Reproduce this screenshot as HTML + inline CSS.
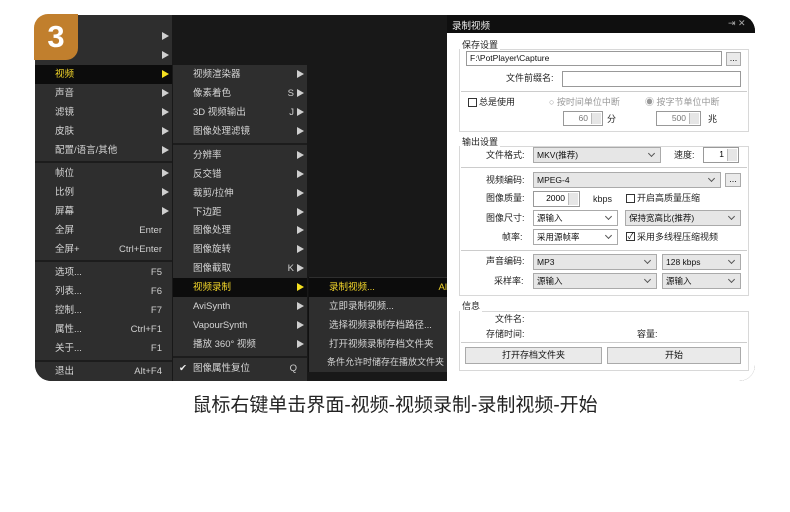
<!DOCTYPE html>
<html><head><meta charset="utf-8"><style>
*{margin:0;padding:0;box-sizing:border-box}
body{width:790px;height:512px;background:#fff;position:relative;overflow:hidden;font-family:"Liberation Sans","Noto Sans CJK SC",sans-serif}
.a{position:absolute}
#panel{left:35px;top:15px;width:720px;height:366px;border-radius:16px;overflow:hidden;background:#181818}
.col{position:absolute;background:#2d2d2d}
.it{position:absolute;height:19px;line-height:19px;font-size:9.5px;color:#d6d6d6;white-space:nowrap}
.it .t{position:absolute;left:20px}
.it .k{position:absolute;right:10px;color:#cfcfcf}
.it .ar{position:absolute;right:3px;top:5px;width:0;height:0;border-left:7px solid #cfcfcf;border-top:4.5px solid transparent;border-bottom:4.5px solid transparent}
.hl{background:#0c0c0c;color:#f3d62a}
.hl .ar{border-left-color:#f5e020}
.sep{position:absolute;height:2px;background:#1c1c1c}
.d{position:absolute;font-size:9px;color:#222;white-space:nowrap;line-height:12px}
.box{position:absolute;border:1px solid #d8d8d8}
.inp{position:absolute;border:1px solid #999;background:#fff;font-size:8.5px;line-height:13px;padding-left:3px;color:#111}
.sel{position:absolute;border:1px solid #aaa;background:#e6e6e6;font-size:8.5px;line-height:14px;padding-left:3px;color:#111}
.sel:after{content:"";position:absolute;right:6px;top:3px;width:4px;height:4px;border-right:1px solid #555;border-bottom:1px solid #555;transform:rotate(45deg)}
.btn{position:absolute;border:1px solid #aaa;background:#eaeaea;font-size:9px;text-align:center;line-height:15px;color:#111}
.sp{position:absolute;border:1px solid #999;background:#fff;font-size:8.5px;line-height:13px;text-align:right;padding-right:14px}
.sp:after{content:"";position:absolute;right:1px;top:1px;width:9px;bottom:1px;background:#e6e6e6;border-left:1px solid #bbb}
.hr{position:absolute;height:1px;background:#ccc}
.cb{position:absolute;width:9px;height:9px;border:1px solid #333;background:#fff}
</style></head><body>
<div id="panel" class="a">
 <div class="col" style="left:0;top:0;width:137px;height:366px;background:#2e2e2e"></div>
 <div class="it" style="left:0;top:12px;width:137px"><span class="ar"></span></div>
 <div class="it" style="left:0;top:31px;width:137px"><span class="t">字幕</span><span class="ar"></span></div>
 <div class="it hl" style="left:0;top:50px;width:137px"><span class="t">视频</span><span class="ar"></span></div>
 <div class="it" style="left:0;top:69px;width:137px"><span class="t">声音</span><span class="ar"></span></div>
 <div class="it" style="left:0;top:88px;width:137px"><span class="t">滤镜</span><span class="ar"></span></div>
 <div class="it" style="left:0;top:107px;width:137px"><span class="t">皮肤</span><span class="ar"></span></div>
 <div class="it" style="left:0;top:126px;width:137px"><span class="t">配置/语言/其他</span><span class="ar"></span></div>
 <div class="sep" style="left:0;top:146px;width:137px"></div>
 <div class="it" style="left:0;top:149px;width:137px"><span class="t">帧位</span><span class="ar"></span></div>
 <div class="it" style="left:0;top:168px;width:137px"><span class="t">比例</span><span class="ar"></span></div>
 <div class="it" style="left:0;top:187px;width:137px"><span class="t">屏幕</span><span class="ar"></span></div>
 <div class="it" style="left:0;top:206px;width:137px"><span class="t">全屏</span><span class="k">Enter</span></div>
 <div class="it" style="left:0;top:225px;width:137px"><span class="t">全屏+</span><span class="k">Ctrl+Enter</span></div>
 <div class="sep" style="left:0;top:245px;width:137px"></div>
 <div class="it" style="left:0;top:248px;width:137px"><span class="t">选项...</span><span class="k">F5</span></div>
 <div class="it" style="left:0;top:267px;width:137px"><span class="t">列表...</span><span class="k">F6</span></div>
 <div class="it" style="left:0;top:286px;width:137px"><span class="t">控制...</span><span class="k">F7</span></div>
 <div class="it" style="left:0;top:305px;width:137px"><span class="t">属性...</span><span class="k">Ctrl+F1</span></div>
 <div class="it" style="left:0;top:324px;width:137px"><span class="t">关于...</span><span class="k">F1</span></div>
 <div class="sep" style="left:0;top:345px;width:137px"></div>
 <div class="it" style="left:0;top:347px;width:137px"><span class="t">退出</span><span class="k">Alt+F4</span></div>
 <div class="col" style="left:138px;top:50px;width:134px;height:316px;background:#2e2e2e"></div>
 <div class="it" style="left:138px;top:50px;width:134px"><span class="t">视频渲染器</span><span class="ar"></span></div>
 <div class="it" style="left:138px;top:69px;width:134px"><span class="t">像素着色</span><span class="k" style="right:13px">S</span><span class="ar"></span></div>
 <div class="it" style="left:138px;top:88px;width:134px"><span class="t">3D 视频输出</span><span class="k" style="right:13px">J</span><span class="ar"></span></div>
 <div class="it" style="left:138px;top:107px;width:134px"><span class="t">图像处理滤镜</span><span class="ar"></span></div>
 <div class="sep" style="left:138px;top:128px;width:134px"></div>
 <div class="it" style="left:138px;top:131px;width:134px"><span class="t">分辨率</span><span class="ar"></span></div>
 <div class="it" style="left:138px;top:150px;width:134px"><span class="t">反交错</span><span class="ar"></span></div>
 <div class="it" style="left:138px;top:169px;width:134px"><span class="t">裁剪/拉伸</span><span class="ar"></span></div>
 <div class="it" style="left:138px;top:188px;width:134px"><span class="t">下边距</span><span class="ar"></span></div>
 <div class="it" style="left:138px;top:206px;width:134px"><span class="t">图像处理</span><span class="ar"></span></div>
 <div class="it" style="left:138px;top:225px;width:134px"><span class="t">图像旋转</span><span class="ar"></span></div>
 <div class="it" style="left:138px;top:244px;width:134px"><span class="t">图像截取</span><span class="k" style="right:13px">K</span><span class="ar"></span></div>
 <div class="it hl" style="left:138px;top:263px;width:134px"><span class="t">视频录制</span><span class="ar"></span></div>
 <div class="it" style="left:138px;top:282px;width:134px"><span class="t">AviSynth</span><span class="ar"></span></div>
 <div class="it" style="left:138px;top:301px;width:134px"><span class="t">VapourSynth</span><span class="ar"></span></div>
 <div class="it" style="left:138px;top:320px;width:134px"><span class="t">播放 360° 视频</span><span class="ar"></span></div>
 <div class="sep" style="left:138px;top:341px;width:134px"></div>
 <div class="it" style="left:138px;top:344px;width:134px"><span style="position:absolute;left:6px;color:#eee">✔</span><span class="t">图像属性复位</span><span class="k">Q</span></div>
 <div class="col" style="left:273px;top:262px;width:139px;height:95px;background:#2e2e2e;border-left:1px solid #111"></div>
 <div class="it hl" style="left:274px;top:263px;width:138px"><span class="t">录制视频...</span><span class="k" style="right:0;color:#f3d62a">Al</span></div>
 <div class="it" style="left:274px;top:282px;width:138px"><span class="t">立即录制视频...</span></div>
 <div class="it" style="left:274px;top:301px;width:138px"><span class="t">选择视频录制存档路径...</span></div>
 <div class="it" style="left:274px;top:320px;width:138px"><span class="t">打开视频录制存档文件夹</span></div>
 <div class="it" style="left:274px;top:338px;width:138px;font-size:9px"><span class="t" style="left:18px">条件允许时储存在播放文件夹</span></div>
 <div class="a" style="left:412px;top:0;width:308px;height:18px;background:#0f0f0f"></div>
 <div class="a" style="left:417px;top:3px;font-size:9.5px;color:#eee">录制视频</div>
 <div class="a" style="left:693px;top:3px;font-size:9px;color:#aaa">⇥ ✕</div>
 <div class="a" style="left:412px;top:18px;width:308px;height:348px;background:#fff"></div>
</div>
<div class="box" style="left:459px;top:49px;width:290px;height:83px"></div>
<div class="d" style="left:460px;top:39px;background:#fff;padding:0 2px">保存设置</div>
<div class="inp" style="left:466px;top:51px;width:256px;height:15px">F:\PotPlayer\Capture</div>
<div class="btn" style="left:726px;top:52px;width:15px;height:14px;line-height:10px">...</div>
<div class="d" style="left:506px;top:72px">文件前缀名:</div>
<div class="inp" style="left:562px;top:71px;width:179px;height:16px"></div>
<div class="hr" style="left:461px;top:91px;width:286px"></div>
<div class="cb" style="left:468px;top:98px"></div><div class="d" style="left:479px;top:96px">总是使用</div>
<div class="d" style="left:549px;top:96px;color:#999">○ 按时间单位中断</div>
<div class="d" style="left:645px;top:96px;color:#999">◉ 按字节单位中断</div>
<div class="sp" style="left:563px;top:111px;width:40px;height:15px;color:#777">60</div><div class="d" style="left:607px;top:113px">分</div>
<div class="sp" style="left:656px;top:111px;width:45px;height:15px;color:#777">500</div><div class="d" style="left:708px;top:113px">兆</div>
<div class="box" style="left:459px;top:146px;width:290px;height:150px"></div>
<div class="d" style="left:460px;top:136px;background:#fff;padding:0 2px">输出设置</div>
<div class="d" style="left:486px;top:149px">文件格式:</div>
<div class="sel" style="left:533px;top:147px;width:128px;height:16px">MKV(推荐)</div>
<div class="d" style="left:674px;top:149px">速度:</div>
<div class="sp" style="left:703px;top:147px;width:36px;height:16px">1</div>
<div class="hr" style="left:461px;top:167px;width:286px"></div>
<div class="d" style="left:486px;top:174px">视频编码:</div>
<div class="sel" style="left:533px;top:172px;width:188px;height:16px">MPEG-4</div>
<div class="btn" style="left:725px;top:173px;width:16px;height:14px;line-height:10px">...</div>
<div class="d" style="left:486px;top:192px">图像质量:</div>
<div class="sp" style="left:533px;top:191px;width:47px;height:16px">2000</div>
<div class="d" style="left:593px;top:193px">kbps</div>
<div class="cb" style="left:626px;top:194px"></div><div class="d" style="left:637px;top:192px">开启高质量压缩</div>
<div class="d" style="left:486px;top:212px">图像尺寸:</div>
<div class="sel" style="left:533px;top:210px;width:85px;height:16px;background:#fff">源输入</div>
<div class="sel" style="left:625px;top:210px;width:116px;height:16px">保持宽高比(推荐)</div>
<div class="d" style="left:502px;top:231px">帧率:</div>
<div class="sel" style="left:533px;top:229px;width:85px;height:16px;background:#fff">采用源帧率</div>
<div class="cb" style="left:626px;top:232px;font-size:8px;line-height:7px;text-align:center">✓</div><div class="d" style="left:637px;top:231px">采用多线程压缩视频</div>
<div class="hr" style="left:461px;top:250px;width:286px"></div>
<div class="d" style="left:486px;top:255px">声音编码:</div>
<div class="sel" style="left:533px;top:254px;width:124px;height:16px">MP3</div>
<div class="sel" style="left:662px;top:254px;width:79px;height:16px">128 kbps</div>
<div class="d" style="left:494px;top:275px">采样率:</div>
<div class="sel" style="left:533px;top:273px;width:124px;height:16px">源输入</div>
<div class="sel" style="left:662px;top:273px;width:79px;height:16px">源输入</div>
<div class="box" style="left:459px;top:311px;width:290px;height:60px"></div>
<div class="d" style="left:460px;top:300px;background:#fff;padding:0 2px">信息</div>
<div class="d" style="left:495px;top:313px">文件名:</div>
<div class="d" style="left:486px;top:328px">存储时间:</div>
<div class="d" style="left:637px;top:328px">容量:</div>
<div class="hr" style="left:461px;top:342px;width:286px"></div>
<div class="btn" style="left:465px;top:347px;width:137px;height:17px">打开存档文件夹</div>
<div class="btn" style="left:607px;top:347px;width:134px;height:17px">开始</div>
<div class="a" style="left:34px;top:14px;width:44px;height:46px;background:#c17f2d;border-radius:14px 0 12px 0;color:#fff;font-size:31px;font-weight:bold;text-align:center;line-height:46px">3</div>
<div class="a" style="left:0;top:390px;width:790px;text-align:center;font-size:19px;color:#222">鼠标右键单击界面-视频-视频录制-录制视频-开始</div>
</body></html>
